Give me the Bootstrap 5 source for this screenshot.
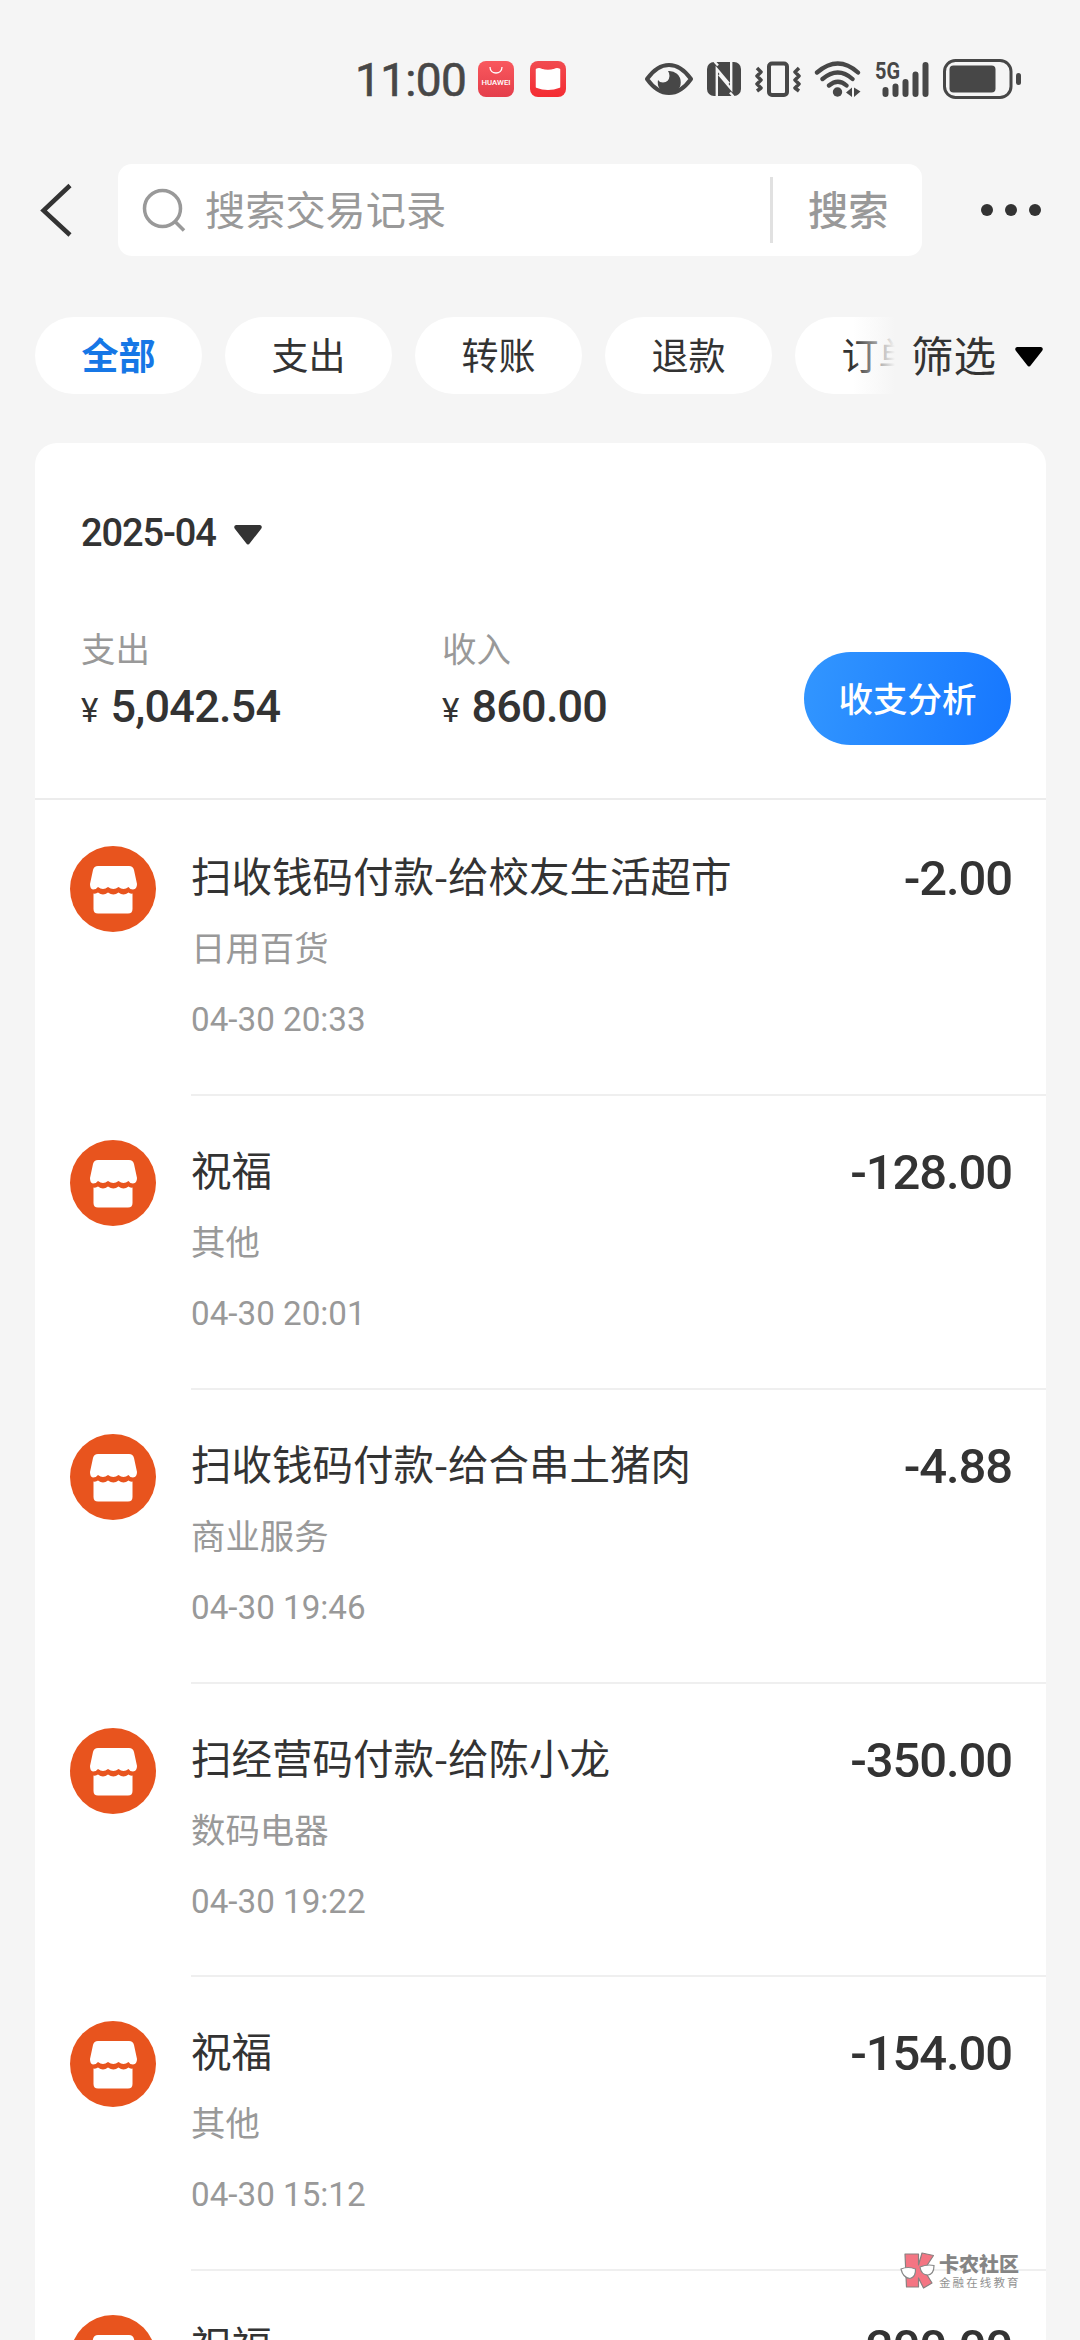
<!DOCTYPE html>
<html lang="zh-CN">
<head>
<meta charset="utf-8">
<meta name="viewport" content="width=device-width, initial-scale=1">
<title>账单</title>
<link href="https://cdn.jsdelivr.net/npm/bootstrap@5.3.0/dist/css/bootstrap.min.css" rel="stylesheet">
<style>
html,body{height:2340px;overflow:hidden}
body{width:1080px;background:#f5f5f5;color:#333;font-family:"Noto Sans CJK SC",sans-serif;font-weight:400}
svg{display:block;flex:none}
.num{font-family:Roboto,"Noto Sans CJK SC",sans-serif}
.statusbar{height:164px;padding:59px 0 0 355px;color:#474747}
.clock{font-size:46px;line-height:42px;letter-spacing:-.7px;width:123px;-webkit-text-stroke:.6px #474747}
.status-reader{margin-left:16px}
.status-eye{margin-left:79px}
.status-gap{margin-left:14px}
.status-near{margin-left:13px}
.topnav{height:92px;padding-left:38px}
.searchbox{width:804px;height:92px;margin-left:42px;border-radius:14px;background:#fff;padding-left:24px;font-size:40.2px;line-height:87px;color:#999}
.search-hint{flex:none;height:92px;width:584px;padding-left:19px}
.search-go{height:92px;font-weight:500;margin-left:35px}
.vline{flex:none;width:3px;height:66px;background:#e1e1e1}
.more{margin-left:58px}
.chips{margin-top:61px;height:77px;padding-left:35px}
.chiplist{width:860px;gap:23px;overflow:hidden}
.chip{flex:none;width:167px;height:77px;border-radius:39px;background:#fff;font-size:37px;line-height:75px;text-align:center}
.chip.active{color:#1677e6;font-weight:700}
.fade-edge{right:0;top:0;width:42px;height:77px;background:linear-gradient(90deg,rgba(245,245,245,0),#f5f5f5)}
.filter{font-size:42.5px;line-height:73px;height:77px;margin-left:16px}
.filter-caret{margin-left:19px;color:#000;margin-top:2px}
.bill{margin:49px 34px 0 35px;background:#fff;border-radius:22px 22px 0 0;height:1897px;overflow:hidden}
.summary{height:357px;padding:66px 35px 0 46px;border-bottom:2px solid #ececec}
.month{font-size:38px;line-height:48px;font-weight:500;letter-spacing:-1.1px;height:48px}
.month svg{margin:4px 0 0 18px}
.label{font-size:34.5px;line-height:40px;color:#999}
.total{font-size:45px;line-height:46px;font-weight:500;letter-spacing:-.8px;margin-top:17px;white-space:nowrap}
.total small{font-size:33px;font-weight:400;margin-right:13px}
.sumcol{width:361px;padding-top:70px}
.analyse{width:207px;height:93px;border-radius:47px;background:linear-gradient(100deg,#3296ff,#1677ff);color:#fff;font-size:34.5px;line-height:86px;font-weight:500;margin:143px 0 0 auto;border:0;padding:0 0 4px}
.entry{height:293.8px;padding-left:35px}
.entry:first-child{height:296px}
.entry:first-child .avatar{margin-top:46px}
.entry:first-child .entry-body{padding-top:48px}
.avatar{margin-top:44px}
.entry-body{margin-left:35px;padding:46px 35px 0 0;border-bottom:2px solid #efefef}
.entry:last-child .entry-body{border:0}
.title{font-size:40.5px;line-height:54px;height:54px}
.amount{font-size:49px;line-height:54px;font-weight:500;letter-spacing:-1.1px;margin:4px -1px 0 0;height:50px}
.cat{font-size:34.4px;line-height:44px;color:#999;margin-top:22px}
.when{font-size:33.2px;line-height:40px;color:#999;margin-top:32px}
.brandmark{left:900px;top:2250px}
.brandcopy{margin:4px 0 0 3px}
.brandname{font-size:20px;line-height:20px;font-weight:900;color:#858585}
.brandsub{font-size:11.5px;line-height:13px;letter-spacing:2.1px;color:#929292;margin-top:2px;white-space:nowrap}
</style>
<script src="https://cdn.jsdelivr.net/npm/bootstrap@5.3.0/dist/js/bootstrap.bundle.min.js"></script>
</head>
<body class="position-relative">
<svg width="0" height="0" class="position-absolute"><defs>
<symbol id="shop" viewBox="0 0 86 86"><circle cx="43" cy="43" r="43" fill="#e8541e"/><path fill="#fff" d="M28 20H59Q63 20 64 24L67 38Q67 43 63 43.500Q60 43.500 58.500 41Q53.500 45 48.500 41Q43.500 45 38 41Q33 45 28 41Q26 43.500 23 43.500Q20 43 20 38L23 24Q24 20 28 20Z"/><path fill="#fff" d="M23.500 47.500Q26 48 28 46.500Q33 50.500 38 46.500Q43.500 50.500 48.500 46.500Q53.500 50.500 58.500 46.500Q60 48 62.500 47.500V63Q62.500 67.500 58 67.500H28Q23.500 67.500 23.500 63Z"/></symbol>
<symbol id="caret" viewBox="0 0 28 20"><path d="M2 0H26Q29 1 27 4L16 18Q14 21 12 18L1 4Q-1 1 2 0Z" fill="currentColor"/></symbol>
</defs></svg>

<header class="statusbar d-flex align-items-start">
  <div class="clock num">11:00</div>
  <svg width="36" height="40" viewBox="0 0 36 40"><defs><linearGradient id="hw" x2="0" y2="1"><stop stop-color="#f9585d"/><stop offset="1" stop-color="#e43e4b"/></linearGradient></defs><rect y="2" width="36" height="36" rx="8" fill="url(#hw)"/><path d="M12 8C12 16 24 16 24 8" fill="none" stroke="#fff" stroke-width="1.300"/><text x="3.500" y="25.500" font-size="7.500" font-weight="500" textLength="29" lengthAdjust="spacingAndGlyphs" fill="#fff" font-family="Roboto,sans-serif">HUAWEI</text></svg>
  <svg class="status-reader" width="36" height="40" viewBox="0 0 36 40"><defs><linearGradient id="rd" x2="0" y2="1"><stop stop-color="#f14b50"/><stop offset="1" stop-color="#f42c32"/></linearGradient></defs><rect y="2" width="36" height="36" rx="8" fill="url(#rd)"/><path d="M6.500 10.500Q9 9 11.500 10.500Q18 12.500 24.500 10.500Q27 9 29.500 10.500V28Q18 32.500 6.500 28Z" fill="#fff" stroke="#fff" stroke-width="1.500" stroke-linejoin="round"/></svg>
  <svg class="status-eye" width="48" height="40" viewBox="0 0 48 40"><path d="M2 20Q12 6 24 6T46 20Q36 34 24 34T2 20Z" fill="none" stroke="#474747" stroke-width="4" stroke-linejoin="round"/><path d="M23 12A11.500 11.500 0 1 1 13 21Q14.500 23.500 18 23.500Q24 23 24.500 17Q24.500 14 23 12Z" fill="#474747"/></svg>
  <svg class="status-gap" width="34" height="40" viewBox="0 0 34 40"><rect y="3" width="34" height="34" rx="7" fill="#474747"/><path d="M9.800 37.500V10L22 24.500M24.200 2.500V30L12 15.500M7.500 2.500L11 6.500M26.500 37.500L23 33.500" fill="none" stroke="#f5f5f5" stroke-width="2.400"/></svg>
  <svg class="status-gap" width="46" height="40" viewBox="0 0 46 40"><g fill="none" stroke="#474747" stroke-linejoin="round"><rect x="14" y="4.500" width="18" height="31.500" rx="3" stroke-width="4"/><path d="M2 9L6 13L2 17L6 21L2 25L6 29L2 32M44 9L40 13L44 17L40 21L44 25L40 29L44 32" stroke-width="3.500"/></g></svg>
  <svg class="status-near" width="48" height="40" viewBox="0 0 48 40"><g fill="none" stroke="#474747" stroke-width="4.300" stroke-linecap="round"><path d="M3 13.500Q24 -4.500 44 13.500M8.500 20Q24 7 38.500 20M15 26.500Q24 19 32.500 26.500"/></g><circle cx="23.500" cy="33" r="4.700" fill="#474747"/><path d="M32 33.500L38 28.500V38ZM40 28.500L46.500 32.500L40 38Z" fill="#474747"/></svg>
  <svg class="status-near" width="54" height="40" viewBox="0 0 54 40"><text x="0" y="19.500" font-size="23" font-weight="700" textLength="25" lengthAdjust="spacingAndGlyphs" fill="#474747" font-family="Roboto,sans-serif">5G</text><path d="M10.500 31V35M20.500 27.500V35M30.500 23V35M40.500 15.500V35M50.500 6V35" stroke="#474747" stroke-width="6" stroke-linecap="round"/></svg>
  <svg class="status-gap" width="78" height="40" viewBox="0 0 78 40"><rect x="1.500" y="1.500" width="66.500" height="37" rx="11" fill="none" stroke="#474747" stroke-width="3"/><rect x="6.500" y="6.500" width="46" height="27" rx="4" fill="#474747"/><rect x="73" y="14" width="5" height="12" rx="2.500" fill="#474747"/></svg>
</header>

<nav class="topnav d-flex align-items-center">
  <svg width="38" height="56" viewBox="0 0 38 56"><path d="M32 3.500L5.500 28.500L32 53" fill="none" stroke="#333" stroke-width="4.500"/></svg>
  <div class="searchbox d-flex align-items-center">
    <svg width="44" height="44" viewBox="0 0 44 44"><circle cx="20.500" cy="20.500" r="18" fill="none" stroke="#999" stroke-width="3.500"/><path d="M33 33.500L42 42.500" stroke="#999" stroke-width="3.500"/></svg>
    <span class="search-hint">搜索交易记录</span>
    <i class="vline"></i>
    <span class="search-go">搜索</span>
  </div>
  <svg class="more" width="62" height="14" viewBox="0 0 62 14"><g fill="#333"><circle cx="7" cy="7" r="6"/><circle cx="31" cy="7" r="6"/><circle cx="55" cy="7" r="6"/></g></svg>
</nav>

<div class="chips d-flex align-items-center">
  <div class="chiplist d-flex position-relative">
    <div class="chip active">全部</div><div class="chip">支出</div><div class="chip">转账</div><div class="chip">退款</div><div class="chip">订单</div>
    <div class="fade-edge position-absolute"></div>
  </div>
  <div class="filter">筛选</div>
  <svg class="filter-caret" width="28" height="20"><use href="#caret"/></svg>
</div>

<main class="bill">
  <section class="summary d-flex">
    <div>
      <div class="month num d-flex align-items-center">2025-04<svg width="28" height="20"><use href="#caret"/></svg></div>
      <div class="d-flex">
        <div class="sumcol"><div class="label">支出</div><div class="total num"><small>¥</small>5,042.54</div></div>
        <div class="sumcol"><div class="label">收入</div><div class="total num"><small>¥</small>860.00</div></div>
      </div>
    </div>
    <button class="analyse btn">收支分析</button>
  </section>
  <section>
    <article class="entry d-flex"><svg class="avatar" width="86" height="86"><use href="#shop"/></svg><div class="entry-body flex-grow-1"><div class="d-flex justify-content-between"><div class="title">扫收钱码付款-给校友生活超市</div><div class="amount num">-2.00</div></div><div class="cat">日用百货</div><div class="when num">04-30 20:33</div></div></article>
    <article class="entry d-flex"><svg class="avatar" width="86" height="86"><use href="#shop"/></svg><div class="entry-body flex-grow-1"><div class="d-flex justify-content-between"><div class="title">祝福</div><div class="amount num">-128.00</div></div><div class="cat">其他</div><div class="when num">04-30 20:01</div></div></article>
    <article class="entry d-flex"><svg class="avatar" width="86" height="86"><use href="#shop"/></svg><div class="entry-body flex-grow-1"><div class="d-flex justify-content-between"><div class="title">扫收钱码付款-给合串土猪肉</div><div class="amount num">-4.88</div></div><div class="cat">商业服务</div><div class="when num">04-30 19:46</div></div></article>
    <article class="entry d-flex"><svg class="avatar" width="86" height="86"><use href="#shop"/></svg><div class="entry-body flex-grow-1"><div class="d-flex justify-content-between"><div class="title">扫经营码付款-给陈小龙</div><div class="amount num">-350.00</div></div><div class="cat">数码电器</div><div class="when num">04-30 19:22</div></div></article>
    <article class="entry d-flex"><svg class="avatar" width="86" height="86"><use href="#shop"/></svg><div class="entry-body flex-grow-1"><div class="d-flex justify-content-between"><div class="title">祝福</div><div class="amount num">-154.00</div></div><div class="cat">其他</div><div class="when num">04-30 15:12</div></div></article>
    <article class="entry d-flex"><svg class="avatar" width="86" height="86"><use href="#shop"/></svg><div class="entry-body flex-grow-1"><div class="d-flex justify-content-between"><div class="title">祝福</div><div class="amount num">-200.00</div></div></div></article>
  </section>
</main>

<div class="brandmark position-absolute d-flex">
  <svg width="36" height="40" viewBox="0 0 36 40"><g fill="#f47583" stroke="#8a8080" stroke-width="1.200" stroke-linejoin="round"><path d="M5 4H18.500V15L22 3L33.500 5.500L24 20L32 33L23.500 38L18.500 28V37H6.500Z"/></g><g fill="#fff" stroke="#888" stroke-width="1.200"><path d="M1 19Q8 16 15.500 19Q16 27 10 28.500Q3 28 1 19ZM20 17Q27 14 34 15.500Q34 24 28 25Q21 25 20 17Z"/></g></svg>
  <div class="brandcopy"><div class="brandname">卡农社区</div><div class="brandsub">金融在线教育</div></div>
</div>
</body>
</html>
